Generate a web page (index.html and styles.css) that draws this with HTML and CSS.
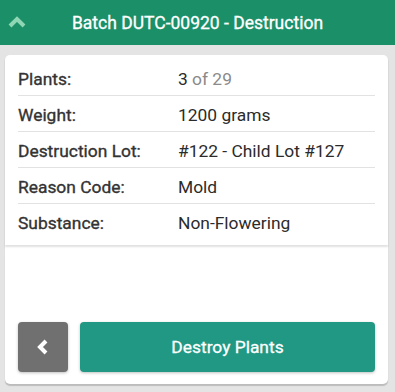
FILE: index.html
```html
<!DOCTYPE html>
<html>
<head>
<meta charset="utf-8">
<link rel="stylesheet" href="styles.css">
</head>
<body>
<header class="topbar">
  <svg class="collapse" width="18" height="12" viewBox="0 0 18 12"><path d="M2 10 L9 3 L16 10" fill="none" stroke="#8fd6b5" stroke-width="4"/></svg>
  <h1 class="title">Batch DUTC-00920 - Destruction</h1>
</header>
<main class="panel">
  <section class="details">
    <div class="row"><span class="label">Plants:</span><span class="value">3 <span class="muted">of 29</span></span></div>
    <div class="row"><span class="label">Weight:</span><span class="value">1200 grams</span></div>
    <div class="row"><span class="label">Destruction Lot:</span><span class="value">#122 - Child Lot #127</span></div>
    <div class="row"><span class="label">Reason Code:</span><span class="value">Mold</span></div>
    <div class="row"><span class="label">Substance:</span><span class="value">Non-Flowering</span></div>
  </section>
  <div class="actions">
    <button class="btn back"><svg width="14" height="16" viewBox="0 0 14 16"><path d="M10 2 L4 8 L10 14" fill="none" stroke="#fff" stroke-width="4"/></svg></button>
    <button class="btn primary">Destroy Plants</button>
  </div>
</main>
</body>
</html>
```
FILE: styles.css
```css
html, body { margin: 0; padding: 0; }
body {
  background: #e4e4e4;
  font-family: Roboto, "Liberation Sans", sans-serif;
  width: 395px;
  height: 392px;
  overflow: hidden;
}
.topbar {
  height: 45px;
  background: #1b9068;
  display: flex;
  align-items: center;
  justify-content: center;
  position: relative;
}
.collapse {
  position: absolute;
  left: 8px;
  top: 16px;
}
.title {
  margin: 0;
  color: #fff;
  font-size: 17.5px;
  font-weight: 400;
  -webkit-text-stroke: 0.3px #fff;
}
.panel {
  margin: 10px 7px 0 5px;
  background: #fff;
  border-radius: 5px;
  height: 329px;
  box-shadow: 0 2px 1px #bcbcbc;
  display: flex;
  flex-direction: column;
}
.details {
  padding: 5px 13px 5px 13px;
  border-radius: 5px 5px 0 0;
  box-shadow: 0 2px 2px rgba(0,0,0,0.12);
}
.row {
  display: flex;
  align-items: center;
  height: 36px;
  padding-top: 2px;
  border-bottom: 1px solid #e2e2e2;
  font-size: 17.4px;
  color: #2b2b2b;
  box-sizing: border-box;
}
.row:last-child { border-bottom: none; }
.label {
  width: 160px;
  font-weight: 400;
  color: #333;
  -webkit-text-stroke: 0.35px #333;
}
.value { color: #2b2b2b; }
.muted { color: #8a8a8a; }
.actions {
  margin-top: auto;
  display: flex;
  gap: 12px;
  padding: 0 13px 12px 13px;
}
.btn {
  border: none;
  height: 50px;
  border-radius: 4px;
  box-shadow: 0 1px 3px rgba(0,0,0,0.25);
  font-family: inherit;
  padding: 0;
  display: flex;
  align-items: center;
  justify-content: center;
}
.back { width: 50px; background: #707070; }
.primary {
  flex: 1;
  background: #219884;
  color: #fff;
  font-size: 17.4px;
  font-weight: 400;
  -webkit-text-stroke: 0.3px #fff;
}
```
